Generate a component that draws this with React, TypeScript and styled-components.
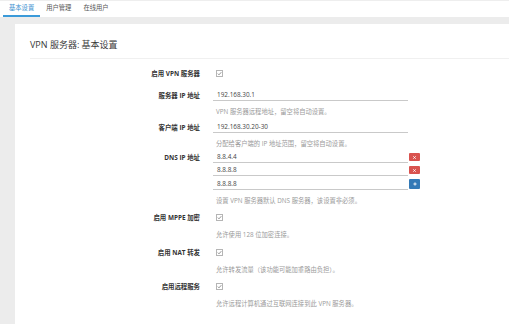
import React from "react";
import styled, { createGlobalStyle } from "styled-components";

const GlobalStyle = createGlobalStyle`
  html, body {
    margin: 0;
    padding: 0;
    background: #fff;
    overflow: hidden;
  }
  body {
    font-family: "Open Sans", "Noto Sans CJK SC", sans-serif;
    color: #333;
  }
`;

const TABS = ["基本设置", "用户管理", "在线用户"];

type FieldData = {
  label: string;
  gap: number;
  kind: "check" | "input" | "list";
  values?: string[];
  help?: string;
};

const FIELDS: FieldData[] = [
  { label: "启用 VPN 服务器", gap: 8, kind: "check" },
  {
    label: "服务器 IP 地址",
    gap: 9,
    kind: "input",
    values: ["192.168.30.1"],
    help: "VPN 服务器远程地址，留空将自动设置。",
  },
  {
    label: "客户端 IP 地址",
    gap: 4,
    kind: "input",
    values: ["192.168.30.20-30"],
    help: "分配给客户端的 IP 地址范围，留空将自动设置。",
  },
  {
    label: "DNS IP 地址",
    gap: 2,
    kind: "list",
    values: ["8.8.4.4", "8.8.8.8", "8.8.8.8"],
    help: "设置 VPN 服务器默认 DNS 服务器，该设置非必须。",
  },
  {
    label: "启用 MPPE 加密",
    gap: 5,
    kind: "check",
    help: "允许使用 128 位加密连接。",
  },
  {
    label: "启用 NAT 转发",
    gap: 6,
    kind: "check",
    help: "允许转发流量（该功能可能加重路由负担）。",
  },
  {
    label: "启用远程服务",
    gap: 5,
    kind: "check",
    help: "允许远程计算机通过互联网连接到此 VPN 服务器。",
  },
];

const CheckIcon = () => (
  <svg width="7" height="7" viewBox="0 0 7 7">
    <rect x="0.5" y="0.5" width="6" height="6" fill="#fff" stroke="#b5b5b5" />
    <polyline points="1.8,3.6 3,4.8 5.3,2.2" fill="none" stroke="#777" strokeWidth="0.8" />
  </svg>
);

const RemoveIcon = () => (
  <svg width="3" height="3" viewBox="0 0 3 3">
    <path d="M0.3 0.3 L2.7 2.7 M2.7 0.3 L0.3 2.7" stroke="#fff" strokeWidth="0.9" />
  </svg>
);

const AddIcon = () => (
  <svg width="4" height="4" viewBox="0 0 4 4">
    <path d="M2 0.4 V3.6 M0.4 2 H3.6" stroke="#fff" strokeWidth="0.9" />
  </svg>
);

const App = () => {
  return (
    <>
      <GlobalStyle />
      <Page>
        <TabBar>
          {TABS.map((tab, index) => (
            <Tab key={tab} $active={index === 0}>
              {tab}
            </Tab>
          ))}
        </TabBar>
        <Main>
          <Card>
            <Title>VPN 服务器: 基本设置</Title>
            <Divider />
            {FIELDS.map((field) => (
              <Field key={field.label} $gap={field.gap}>
                <Label>{field.label}</Label>
                <Control>
                  {field.kind === "check" && (
                    <CheckRow>
                      <CheckIcon />
                    </CheckRow>
                  )}
                  {field.kind === "input" &&
                    field.values!.map((v) => (
                      <InputRow key={v}>
                        <TextInput>{v}</TextInput>
                      </InputRow>
                    ))}
                  {field.kind === "list" &&
                    field.values!.map((v, index) => {
                      const last = index === field.values!.length - 1;
                      return (
                        <InputRow key={index} $spaced={last}>
                          <TextInput>{v}</TextInput>
                          <IconButton $add={last}>
                            {last ? <AddIcon /> : <RemoveIcon />}
                          </IconButton>
                        </InputRow>
                      );
                    })}
                  {field.help && (
                    <Help $afterCheck={field.kind === "check"}>{field.help}</Help>
                  )}
                </Control>
              </Field>
            ))}
          </Card>
        </Main>
      </Page>
    </>
  );
};

const Page = styled.div`
  width: 509px;
  height: 324px;
  display: flex;
  flex-direction: column;
`;

const TabBar = styled.div`
  display: flex;
  height: 16px;
  padding-left: 3px;
  border-top: 1px solid #eeeeee;
  background: #fff;
`;

const Tab = styled.div<{ $active?: boolean }>`
  padding: 0 6px;
  height: 14px;
  line-height: 13px;
  font-size: 6.3px;
  color: ${({ $active }) => ($active ? "#3a8fd0" : "#555")};
  border-bottom: 2px solid ${({ $active }) => ($active ? "#3b9ad9" : "transparent")};
`;

const Main = styled.div`
  flex: 1;
  background: #ececec;
  padding: 7px 0 0 15px;
  display: flex;
`;

const Card = styled.div`
  flex: 1;
  background: #fff;
`;

const Title = styled.div`
  padding: 15px 0 0 15px;
  height: 12px;
  line-height: 12px;
  font-size: 9px;
  color: #3a3a3a;
`;

const Divider = styled.div`
  margin: 7px 0 0 15px;
  height: 1px;
  background: #f0f0f0;
`;

const Field = styled.div<{ $gap: number }>`
  display: flex;
  gap: 13px;
  margin-top: ${({ $gap }) => $gap}px;
`;

const Label = styled.div`
  width: 185px;
  text-align: right;
  line-height: 13px;
  font-size: 6.4px;
  font-weight: 700;
  color: #333;
  white-space: nowrap;
`;

const Control = styled.div`
  display: flex;
  flex-direction: column;
  width: 210px;
`;

const CheckRow = styled.div`
  height: 12px;
  display: flex;
  align-items: center;
  padding-left: 3px;
`;

const InputRow = styled.div<{ $spaced?: boolean }>`
  display: flex;
  align-items: center;
  gap: 1px;
  margin-bottom: 1px;
  margin-top: ${({ $spaced }) => ($spaced ? "1px" : "0")};
`;

const TextInput = styled.div`
  width: 191px;
  height: 11px;
  line-height: 11px;
  padding-left: 4px;
  font-size: 6.4px;
  color: #444;
  border-bottom: 1px solid #c9c9c9;
`;

const IconButton = styled.div<{ $add?: boolean }>`
  width: 11px;
  height: ${({ $add }) => ($add ? "10px" : "8px")};
  border-radius: 1px;
  background: ${({ $add }) => ($add ? "#337ab7" : "#d9534f")};
  display: flex;
  align-items: center;
  justify-content: center;
`;

const Help = styled.div<{ $afterCheck?: boolean }>`
  margin-top: ${({ $afterCheck }) => ($afterCheck ? "6px" : "4px")};
  padding-left: 3px;
  height: 11px;
  line-height: 11px;
  font-size: 6.3px;
  color: #9a9a9a;
  white-space: nowrap;
`;

export default App;
